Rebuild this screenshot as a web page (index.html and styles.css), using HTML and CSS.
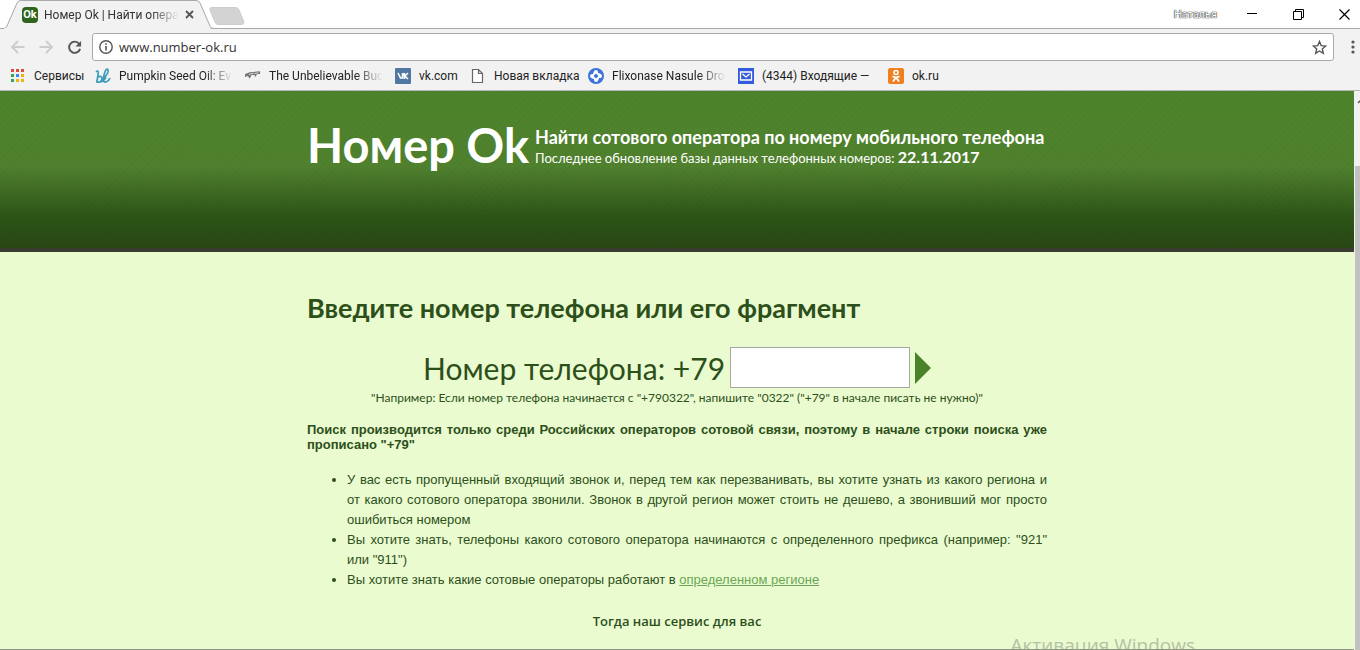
FILE: index.html
```html
<!DOCTYPE html>
<html lang="ru">
<head>
  <meta charset="UTF-8">
  <meta name="viewport" content="width=device-width, initial-scale=1.0">
  <title>Номер Ok | Найти оператора</title>
  <link rel="stylesheet" href="styles.css">
</head>
<body>
  <div class="tab-strip">
    <div class="tab">
      <svg class="tab-shape" width="214" height="29" viewBox="0 0 214 29"><path d="M0 28.500H3Q6 28.500 7 26L17 3Q18 .5 21 .5H196Q199 .5 200 3L210 26Q211 28.500 214 28.500" fill="#f2f2f2" stroke="#a9a9a9"/><path d="M4 29H210" stroke="#f2f2f2" stroke-width="2"/></svg>
      <span class="tab-icon">Ok</span>
      <span class="tab-title fade">Номер Ok | Найти опера</span>
      <button class="icon-button" aria-label="Закрыть вкладку"><svg width="9" height="9" viewBox="0 0 9 9"><path d="M1 1L8 8M8 1L1 8" stroke="#555" stroke-width="1.800"/></svg></button>
    </div>
    <button class="icon-button new-tab" aria-label="Новая вкладка"><svg width="36" height="18" viewBox="0 0 36 18"><path d="M3 .5H27Q29 .5 30 3L35 15Q35 17 33 17.500H9Q7 17.500 6 15L1 3Q0 .5 3 .5Z" fill="#d3d3d3" stroke="#cdcdcd"/></svg></button>
    <div class="window-buttons">
      <span class="profile">Наталья</span>
      <button class="icon-button" aria-label="Свернуть"><svg width="11" height="11" viewBox="0 0 11 11"><path d="M0 4.500H10" stroke="#000"/></svg></button>
      <button class="icon-button" aria-label="Развернуть"><svg width="11" height="11" viewBox="0 0 11 11"><path d="M.5 2.500H8.500V10.500H.5ZM2.500 2V.5H10.500V8.500H9" fill="none" stroke="#000"/></svg></button>
      <button class="icon-button" aria-label="Закрыть"><svg width="11" height="11" viewBox="0 0 11 11"><path d="M.5 .5L10.500 10.500M10.500 .5L.5 10.500" stroke="#000" stroke-width="1.200"/></svg></button>
    </div>
  </div>

  <div class="toolbar">
    <button class="icon-button" aria-label="Назад"><svg width="14" height="14" viewBox="0 0 14 14"><path d="M13.500 7H1M7 1L1 7L7 13" fill="none" stroke="#ccc" stroke-width="1.800"/></svg></button>
    <button class="icon-button" aria-label="Вперёд"><svg width="14" height="14" viewBox="0 0 14 14"><path d="M.5 7H13M7 1L13 7L7 13" fill="none" stroke="#ccc" stroke-width="1.800"/></svg></button>
    <button class="icon-button" aria-label="Обновить"><svg width="15" height="15" viewBox="0 0 16 16"><path d="M13 4A6 6 0 1 0 14 9.500" fill="none" stroke="#555" stroke-width="2"/><path d="M15 1V7H9Z" fill="#555"/></svg></button>
    <div class="address">
      <svg width="14" height="14" viewBox="0 0 14 14"><circle cx="7" cy="7" r="6.200" fill="none" stroke="#555" stroke-width="1.400"/><path d="M7 6V10.500M7 3.200V4.800" stroke="#555" stroke-width="1.600"/></svg>
      <input type="text" value="www.number-ok.ru" aria-label="Адрес">
      <button class="icon-button" aria-label="В закладки"><svg width="15" height="15" viewBox="0 0 15 15"><path d="M7.500 1.500L9.200 5.600L13.700 6L10.300 8.900L11.300 13.300L7.500 11L3.700 13.300L4.700 8.900L1.300 6L5.800 5.600Z" fill="none" stroke="#555" stroke-width="1.400"/></svg></button>
    </div>
    <button class="icon-button menu" aria-label="Меню"><svg width="4" height="14" viewBox="0 0 4 14"><circle cx="2" cy="2" r="1.600" fill="#555"/><circle cx="2" cy="7" r="1.600" fill="#555"/><circle cx="2" cy="12" r="1.600" fill="#555"/></svg></button>
  </div>

  <nav class="bookmarks">
    <a href="#"><svg width="16" height="16" viewBox="0 0 16 16"><path d="M1 1h3v3H1zM6 1h3v3H6zM11 1h3v3h-3z" fill="#dd4b39"/><path d="M1 6h3v3H1z" fill="#2da94f"/><path d="M6 6h3v3H6z" fill="#4285f4"/><path d="M11 6h3v3h-3z" fill="#eeb211"/><path d="M1 11h3v3H1z" fill="#2da94f"/><path d="M6 11h3v3H6zM11 11h3v3h-3z" fill="#eeb211"/></svg><span class="bm-short">Сервисы</span></a>
    <a href="#"><svg width="16" height="16" viewBox="0 0 16 16"><path d="M1 4Q4 1 3 7L2 13Q5 16 7 11Q7 7 3 9M8 11Q14 5 13 2Q11 -1 9 7Q7 15 11 14Q14 13 15 10M1 14Q8 15 11 9" fill="none" stroke="#3b9dbb" stroke-width="1.700"/></svg><span class="bm-long fade">Pumpkin Seed Oil: Ev</span></a>
    <a href="#"><svg width="16" height="16" viewBox="0 0 17 16"><path d="M0 6L5 4L16 3V6L13 6L11 9L10 7L7 7L5 11L3 8L0 9Z" fill="#777"/><path d="M4 6.500L9 5M10 5.500L14 4.500" stroke="#ddd"/></svg><span class="bm-long fade">The Unbelievable Buc</span></a>
    <a href="#"><svg width="16" height="16" viewBox="0 0 16 16"><rect width="16" height="16" rx="1" fill="#5077a2"/><path d="M3 5L5.500 10H7.500V5M7.500 7.500Q9 8 9.500 5M13 5L10 8L13 11M9.500 5V11" fill="none" stroke="#fff" stroke-width="1.600"/></svg><span class="bm-vk">vk.com</span></a>
    <a href="#"><svg width="16" height="16" viewBox="0 0 16 16"><path d="M2.500 1.500H8.500L12.500 5.500V14.500H2.500ZM8.500 1.500V5.500H12.500" fill="#fff" stroke="#666" stroke-width="1.200"/></svg><span class="bm-new">Новая вкладка</span></a>
    <a href="#"><svg width="16" height="16" viewBox="0 0 16 16"><circle cx="8" cy="8" r="8" fill="#3e74d8"/><path d="M8 2Q10 2 10 5Q14 6 14 8Q14 10 11 10Q10 14 8 14Q6 14 6 11Q2 10 2 8Q2 6 5 6Q6 2 8 2Z" fill="#fff"/><path d="M8 5.500L10.500 8L8 10.500L5.500 8Z" fill="#3e74d8"/></svg><span class="bm-long fade">Flixonase Nasule Drop</span></a>
    <a href="#"><svg width="16" height="16" viewBox="0 0 16 16"><rect width="16" height="16" fill="#345bdc"/><path d="M2.500 4H13.500V12H2.500ZM4.500 6L8 9L11.500 6" fill="none" stroke="#fff" stroke-width="1.300"/></svg><span class="bm-long">(4344) Входящие —</span></a>
    <a href="#"><svg width="16" height="16" viewBox="0 0 16 16"><rect width="16" height="16" rx="2" fill="#ee8022"/><circle cx="8" cy="4.500" r="2" fill="none" stroke="#fff" stroke-width="1.600"/><path d="M4.500 8.300Q8 10.500 11.500 8.300M8 9.500L5 13.500M8 9.500L11 13.500" fill="none" stroke="#fff" stroke-width="1.800"/></svg><span>ok.ru</span></a>
  </nav>

  <div class="viewport">
    <div class="page">
      <header>
        <div class="container header-row">
          <h1>Номер Ok</h1>
          <div>
            <p class="slogan">Найти сотового оператора по номеру мобильного телефона</p>
            <p class="updated">Последнее обновление базы данных телефонных номеров: <b>22.11.2017</b></p>
          </div>
        </div>
      </header>
      <main class="container">
        <h2>Введите номер телефона или его фрагмент</h2>
        <form class="search">
          <label for="phone">Номер телефона: +79</label>
          <input type="text" id="phone">
          <button class="icon-button" type="submit" aria-label="Найти"><svg width="16" height="32" viewBox="0 0 16 32"><path d="M0 0L16 16L0 32Z" fill="#4c812b"/></svg></button>
        </form>
        <p class="hint">"Например: Если номер телефона начинается с "+790322", напишите "0322" ("+79" в начале писать не нужно)"</p>
        <p class="info">Поиск производится только среди Российских операторов сотовой связи, поэтому в начале строки поиска уже прописано "+79"</p>
        <ul>
          <li>У вас есть пропущенный входящий звонок и, перед тем как перезванивать, вы хотите узнать из какого региона и от&nbsp;какого сотового оператора звонили. Звонок в другой регион может стоить не дешево, а звонивший мог просто ошибиться номером</li>
          <li>Вы хотите знать, телефоны какого сотового оператора начинаются с определенного префикса (например: "921" или "911")</li>
          <li>Вы хотите знать какие сотовые операторы работают в <a href="#">определенном регионе</a></li>
        </ul>
        <p class="service">Тогда наш сервис для вас</p>
      </main>
      <div class="watermark">Активация Windows</div>
    </div>
    <div class="scrollbar"><svg width="5" height="75" viewBox="0 0 5 75"><path d="M3 12L6 9" fill="none" stroke="#555" stroke-width="1.500"/></svg><div class="thumb"></div></div>
  </div>
</body>
</html>
```
FILE: styles.css
```css
* {
  box-sizing: border-box;
}
body {
  margin: 0;
  height: 100vh;
  display: flex;
  flex-direction: column;
  overflow: hidden;
  background-color: #f2f2f2;
  font-family: Roboto, "Open Sans", sans-serif;
  font-size: 12px;
  color: #333;
}
h1, h2, p, ul {
  margin: 0;
}
svg {
  display: block;
  flex: none;
}
.icon-button {
  padding: 0;
  border: none;
  background: none;
  cursor: pointer;
}
.fade {
  white-space: nowrap;
  -webkit-mask-image: linear-gradient(to left, transparent, #000 28px);
  mask-image: linear-gradient(to left, transparent, #000 28px);
}

/* tabs */
.tab-strip {
  display: flex;
  height: 29px;
  background-color: #fff;
  border-bottom: 1px solid #a9a9a9;
}
.tab {
  position: relative;
  display: flex;
  align-items: center;
  width: 212px;
  height: 29px;
  padding-left: 22px;
}
.tab-shape {
  position: absolute;
  left: 0;
  top: 0;
}
.tab-icon {
  position: relative;
  width: 16px;
  height: 16px;
  border-radius: 4px;
  background-color: #2f641c;
  color: #fff;
  font-size: 11px;
  font-weight: bold;
  line-height: 16px;
  text-align: center;
}
.tab-title {
  position: relative;
  width: 135px;
  margin: 0 6px;
}
.tab .icon-button {
  position: relative;
}
.new-tab {
  align-self: center;
  margin: 3px 0 0 -3px;
}
.window-buttons {
  display: flex;
  align-items: center;
  gap: 35px;
  margin-left: auto;
  padding-right: 10px;
}
.profile {
  margin-right: -5px;
  font-size: 11px;
  color: #fff;
  text-shadow: 0 0 1px #333, 0 0 1px #333, 0 0 1px #333;
}

/* toolbar */
.toolbar {
  display: flex;
  align-items: center;
  gap: 14px;
  height: 36px;
  padding: 0 5px 0 11px;
}
.address {
  flex: 1;
  display: flex;
  align-items: center;
  gap: 6px;
  height: 28px;
  margin: 0 3px 0 -4px;
  padding: 0 6px;
  border: 1px solid #aaa;
  border-radius: 3px;
  background-color: #fff;
}
.address input {
  flex: 1;
  padding: 0;
  border: none;
  outline: none;
  background: none;
  font-family: "Open Sans", sans-serif;
  font-size: 13px;
  color: #333;
}

/* bookmarks */
.bookmarks {
  display: flex;
  align-items: center;
  gap: 12px;
  height: 26px;
  padding: 0 10px 4px;
  border-bottom: 1px solid #b5b5b5;
}
.bookmarks a {
  display: flex;
  align-items: center;
  gap: 8px;
  color: #222;
  text-decoration: none;
  white-space: nowrap;
}
.bm-short {
  width: 49px;
}
.bm-long {
  width: 114px;
}
.bm-vk {
  width: 39px;
}
.bm-new {
  width: 82px;
}

/* page */
.viewport {
  flex: 1;
  min-height: 0;
  display: flex;
}
.page {
  position: relative;
  flex: 1;
  overflow: hidden;
  background-color: #eafbd0;
  border-bottom: 1px solid #8d9681;
  font-family: Lato, "Open Sans", sans-serif;
  color: #2d4f1a;
}
.container {
  width: 740px;
  max-width: 100%;
  margin: 0 auto;
}
header {
  height: 161px;
  border-bottom: 4px solid #393c2f;
  background:
    repeating-linear-gradient(135deg, rgba(0, 0, 0, 0.03) 0 1px, transparent 1px 4px),
    linear-gradient(#4d842b, #50812e 75px, #2c5517 125px, #284714);
  color: #fff;
}
.header-row {
  display: flex;
  gap: 6px;
  padding-top: 18px;
}
h1 {
  font-size: 47px;
  line-height: 72px;
  white-space: nowrap;
}
.header-row div {
  padding-top: 17px;
  white-space: nowrap;
}
.slogan {
  font-size: 18px;
  font-weight: bold;
  line-height: 22px;
}
.updated {
  font-size: 13px;
  line-height: 18px;
}
.updated b {
  font-size: 16px;
}
h2 {
  padding-top: 36px;
  font-size: 27px;
  line-height: 40px;
}
.search {
  display: flex;
  align-items: center;
  justify-content: center;
  gap: 5px;
  padding-top: 19px;
}
.search label {
  font-size: 30px;
  line-height: 40px;
}
.search input {
  width: 180px;
  height: 41px;
  border: 1px solid #a5a9a0;
  background-color: #fff;
  font-size: 30px;
}
.hint {
  text-align: center;
  font-size: 12px;
  line-height: 20px;
}
.info {
  padding-top: 14px;
  font: bold 13px/15px "Liberation Sans", Arial, sans-serif;
  text-align: justify;
}
ul {
  padding: 18px 0 0 40px;
  font: 13px/20px "Liberation Sans", Arial, sans-serif;
  text-align: justify;
}
ul a {
  color: #6ba856;
}
.service {
  padding-top: 21px;
  font-family: "Open Sans", sans-serif;
  font-size: 13px;
  font-weight: 600;
  line-height: 20px;
  text-align: center;
}
.watermark {
  position: absolute;
  right: 159px;
  bottom: -9px;
  font-family: "Open Sans", sans-serif;
  font-size: 19px;
  line-height: 26px;
  color: #b5c2a4;
}
.scrollbar {
  display: flex;
  flex-direction: column;
  width: 6px;
  padding-left: 1px;
  background-color: #f1f1f1;
}
.thumb {
  flex: 1;
  background-color: #c1c1c1;
}
```
